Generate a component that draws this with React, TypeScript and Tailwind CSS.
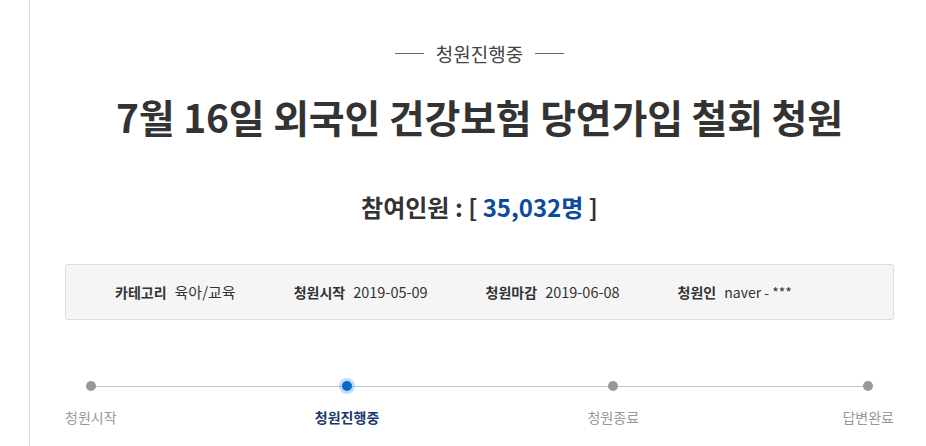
import React from "react";

const font = { fontFamily: '"Noto Sans CJK KR", "Noto Sans", sans-serif' };

export default function App() {
  const steps = [
    { label: "청원시작", active: false },
    { label: "청원진행중", active: true },
    { label: "청원종료", active: false },
    { label: "답변완료", active: false },
  ];
  return (
    <div className="w-full h-[446px] bg-white overflow-hidden" style={font}>
      <div className="ml-[29px] w-[900px] h-full border-l border-[#dddddd]">
        <div className="pt-[40px] flex items-center justify-center gap-[12px]">
          <span className="block w-[29px] h-px bg-[#666]" />
          <span className="text-[19px] leading-[27px] text-[#444]">청원진행중</span>
          <span className="block w-[29px] h-px bg-[#666]" />
        </div>
        <h1 className="mt-[24px] text-center text-[39px] leading-[51px] font-bold text-[#333] tracking-[-0.2px]">
          7월 16일 외국인 건강보험 당연가입 철회 청원
        </h1>
        <div className="mt-[49px] text-center text-[24px] leading-[32px] font-bold text-[#333]">
          참여인원 : [ <span className="text-[#0b4aa2]">35,032명</span> ]
        </div>
        <div className="mx-[35px] mt-[41px] h-[56px] rounded-[3px] border border-[#dcdcdc] bg-[#f5f5f5] flex items-center pl-[49px] gap-[58px] text-[14px] text-[#333]">
          <div className="flex items-center gap-[8px]">
            <span className="font-bold">카테고리</span>
            <span className="text-[15px]">육아/교육</span>
          </div>
          <div className="flex items-center gap-[8px]">
            <span className="font-bold">청원시작</span>
            <span className="text-[14.5px]">2019-05-09</span>
          </div>
          <div className="flex items-center gap-[8px]">
            <span className="font-bold">청원마감</span>
            <span className="text-[14.5px]">2019-06-08</span>
          </div>
          <div className="flex items-center gap-[8px]">
            <span className="font-bold">청원인</span>
            <span>naver - ***</span>
          </div>
        </div>
        <div className="mx-[35px] mt-[61px] relative">
          <div className="absolute left-[27px] right-[27px] top-[5px] h-px bg-[#c4c4c4]" />
          <div className="relative flex justify-between">
            {steps.map((s) => (
              <div
                key={s.label}
                className={"flex flex-col items-center " + (s.active ? "-translate-x-[5px]" : "")}
              >
                <div className="h-[10px] flex items-center justify-center">
                  {s.active ? (
                    <span className="block w-[10px] h-[10px] rounded-full bg-[#0a66c8] shadow-[0_0_0_3px_rgba(80,160,255,0.35)]" />
                  ) : (
                    <span className="block w-[10px] h-[10px] rounded-full bg-[#999]" />
                  )}
                </div>
                <span
                  className={
                    "mt-[16px] text-[14px] leading-[20px] " +
                    (s.active ? "font-bold text-[#1a3a6e]" : "text-[#999]")
                  }
                >
                  {s.label}
                </span>
              </div>
            ))}
          </div>
        </div>
      </div>
    </div>
  );
}
